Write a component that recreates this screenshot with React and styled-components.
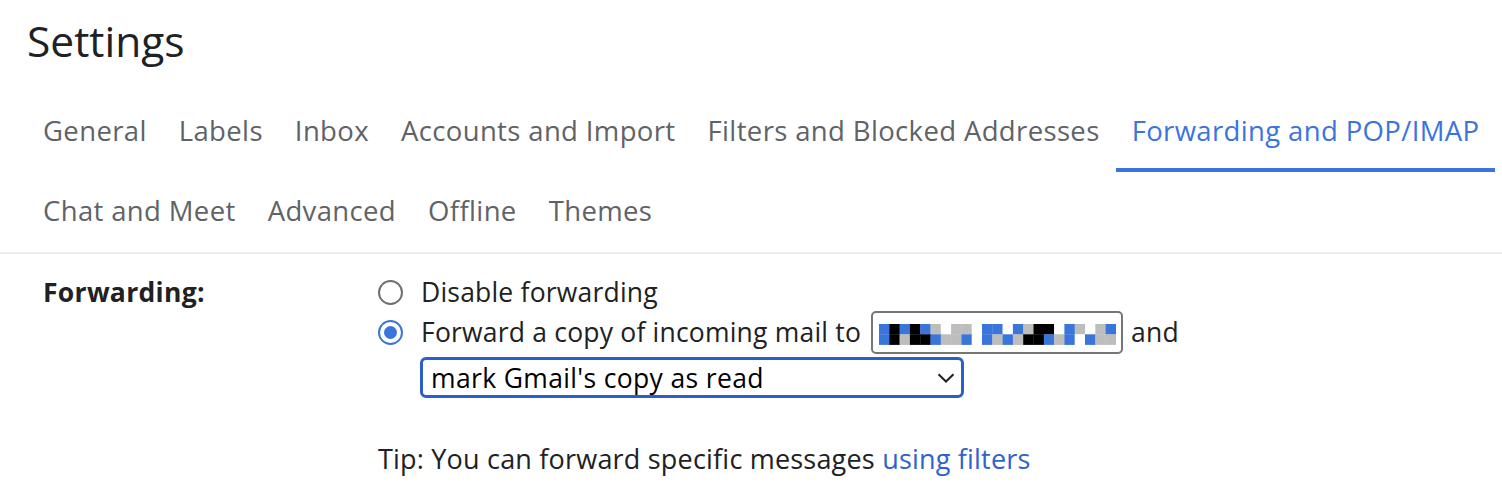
import React from "react";
import styled, { createGlobalStyle } from "styled-components";

const GlobalStyle = createGlobalStyle`
  html, body {
    margin: 0;
    padding: 0;
    background: #ffffff;
  }
  body {
    font-family: "Open Sans", "Liberation Sans", Arial, sans-serif;
    color: #202124;
  }
`;

const topTabs = [
  "General",
  "Labels",
  "Inbox",
  "Accounts and Import",
  "Filters and Blocked Addresses",
  "Forwarding and POP/IMAP",
];
const bottomTabs = ["Chat and Meet", "Advanced", "Offline", "Themes"];

// pixelated (redacted) e-mail address
const mosaic = [
  "bkbkbgwggwbbwbgkkwbgwgb",
  "bkgkkbggbwbgbgkkbgbwbgg",
];
const mosaicColors = { k: "#000000", b: "#3a75dc", w: "#ffffff", g: "#bdbdbd" };

function Mosaic() {
  const cell = 10.3;
  return (
    <svg width={Math.round(mosaic[0].length * cell)} height={Math.round(mosaic.length * cell)} style={{ display: "block" }}>
      {mosaic.map((row, y) =>
        row.split("").map((c, x) => (
          <rect key={x + "-" + y} x={x * cell} y={y * cell} width={cell + 0.3} height={cell + 0.3} fill={mosaicColors[c]} />
        ))
      )}
    </svg>
  );
}

function App() {
  return (
    <Page>
      <GlobalStyle />
      <Title>Settings</Title>
      <Tabs>
        <TabRow>
          {topTabs.map((t) => (
            <Tab key={t} $active={t === "Forwarding and POP/IMAP"}>
              {t}
            </Tab>
          ))}
        </TabRow>
        <TabRow>
          {bottomTabs.map((t) => (
            <Tab key={t}>{t}</Tab>
          ))}
        </TabRow>
      </Tabs>
      <Section>
        <Label>Forwarding:</Label>
        <Options>
          <OptionRow>
            <Radio />
            <span>Disable forwarding</span>
          </OptionRow>
          <OptionRow>
            <Radio $checked />
            <span>Forward a copy of incoming mail to</span>
            <AddressBox>
              <Mosaic />
            </AddressBox>
            <span>and</span>
          </OptionRow>
          <SelectBox>
            <span>mark Gmail's copy as read</span>
            <svg width="18" height="10" viewBox="0 0 18 10">
              <path d="M1.5 1.2 L9 8.5 L16.5 1.2" fill="none" stroke="#202124" strokeWidth="2" />
            </svg>
          </SelectBox>
          <Tip>
            Tip: You can forward specific messages <a href="#">using filters</a>
          </Tip>
        </Options>
      </Section>
    </Page>
  );
}

const Page = styled.div`
  width: 1502px;
  height: 498px;
  overflow: hidden;
  background: #fff;
  border-top-left-radius: 16px;
`;

const Title = styled.h1`
  box-sizing: border-box;
  margin: 0;
  padding: 12px 0 0 27px;
  height: 92px;
  font-size: 42.5px;
  font-weight: 400;
  line-height: normal;
  color: #202124;
`;

const Tabs = styled.div`
  padding-left: 27px;
  border-bottom: 2px solid #ededed;
`;

const TabRow = styled.div`
  display: flex;
  height: 80px;
`;

const Tab = styled.div`
  display: flex;
  align-items: center;
  padding: 1px 16px 0 16px;
  font-size: 27.5px;
  letter-spacing: 0.36px;
  color: ${(p) => (p.$active ? "#3a74dc" : "#5f6368")};
  border-bottom: 4px solid ${(p) => (p.$active ? "#3a74dc" : "transparent")};
  white-space: nowrap;
`;

const Section = styled.div`
  display: grid;
  grid-template-columns: 335px 1fr;
  padding: 18px 0 0 43px;
`;

const Label = styled.div`
  font-size: 26.5px;
  font-weight: 700;
  letter-spacing: 0.3px;
  line-height: 40px;
  color: #202124;
`;

const Options = styled.div`
  display: flex;
  flex-direction: column;
  font-size: 26.5px;
  letter-spacing: 0.2px;
  line-height: 40px;
`;

const OptionRow = styled.div`
  display: flex;
  align-items: center;
  height: 40px;
  white-space: nowrap;
`;

const Radio = styled.span`
  box-sizing: border-box;
  flex: none;
  width: 25px;
  height: 25px;
  margin: 0 18px 0 0;
  border-radius: 50%;
  border: 2px solid ${(p) => (p.$checked ? "#3a74dc" : "#6f6f6f")};
  display: flex;
  align-items: center;
  justify-content: center;
  &::after {
    content: "";
    width: 13px;
    height: 13px;
    border-radius: 50%;
    background: ${(p) => (p.$checked ? "#3a74dc" : "transparent")};
  }
`;

const AddressBox = styled.span`
  box-sizing: border-box;
  display: flex;
  align-items: flex-end;
  height: 43px;
  margin: 0 8px 0 10px;
  padding: 0 5px 7px 6px;
  border: 2px solid #767676;
  border-radius: 5px;
`;

const SelectBox = styled.div`
  box-sizing: border-box;
  display: flex;
  align-items: center;
  justify-content: space-between;
  width: 544px;
  height: 41px;
  margin: 5px 0 0 42px;
  padding: 0 6px 0 8px;
  border: 3px solid #2a5fc7;
  border-radius: 6px;
  color: #000;
  letter-spacing: 0.35px;
`;

const Tip = styled.div`
  margin-top: 41px;
  line-height: 40px;
  font-size: 27px;
  letter-spacing: 0.2px;
  a {
    color: #2f62d0;
    text-decoration: none;
  }
`;

export default App;
